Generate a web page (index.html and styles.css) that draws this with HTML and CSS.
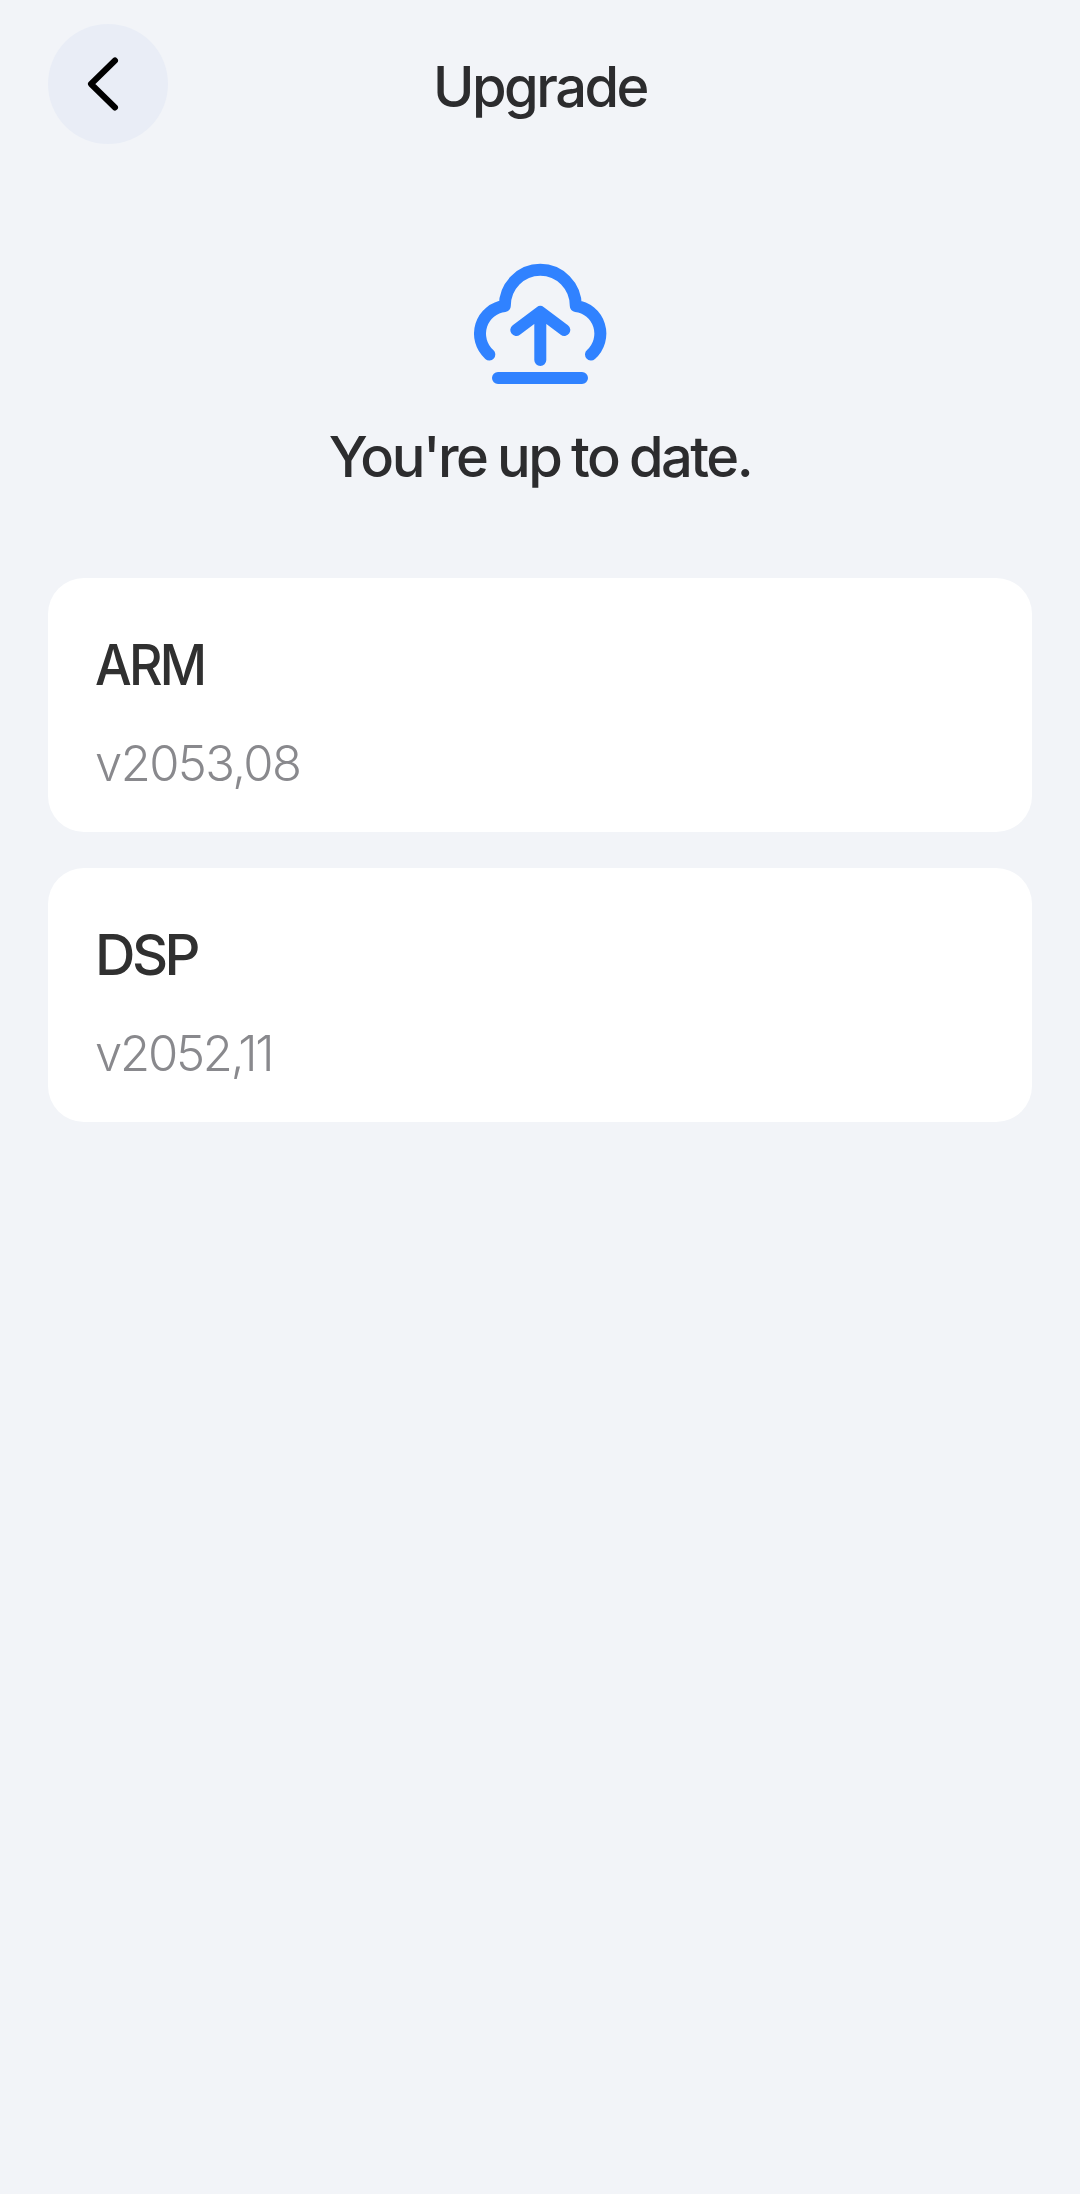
FILE: index.html
```html
<!DOCTYPE html>
<html lang="en">
<head>
<meta charset="utf-8">
<title>Upgrade</title>
<link rel="stylesheet" href="styles.css">
</head>
<body>
<header class="bar">
  <button class="back" aria-label="Back">
    <svg width="120" height="120" viewBox="0 0 120 120" fill="none" stroke="#000" stroke-width="6" stroke-linecap="round" stroke-linejoin="round"><path d="M67 36.5 43 60 67 83.5"/></svg>
  </button>
  <h1 class="title">Upgrade</h1>
</header>
<main>
  <section class="status">
    <svg class="cloud" width="160" height="150" viewBox="0 0 160 150" fill="none" stroke="#3082ff" stroke-width="12" stroke-linecap="round" stroke-linejoin="round">
      <path d="M29.3 104.4A27.8 27.8 0 0 1 44.8 56A35.3 36 0 0 1 115.8 56A27.8 27.8 0 0 1 131 104.4"/>
      <path d="M80.3 110V62M56.3 80 80.3 62 104.3 80M38 128H122"/>
    </svg>
    <p class="message">You're up to date.</p>
  </section>
  <section class="list">
    <article class="card"><h2 class="name name-arm">ARM</h2><p class="version">v2053,08</p></article>
    <article class="card"><h2 class="name">DSP</h2><p class="version version-dsp">v2052,11</p></article>
  </section>
</main>
</body>
</html>
```
FILE: styles.css
```css
* { box-sizing: border-box; margin: 0; padding: 0; }
body { min-height: 2194px; background: #f2f4f8; color: #2c2c2e; font-family: Inter, "Liberation Sans", sans-serif; }
.bar { display: grid; grid-template-columns: 120px 1fr 120px; align-items: center; height: 168px; padding: 0 48px; }
.back { width: 120px; height: 120px; border: 0; border-radius: 50%; background: #e9edf6; }
.back svg { display: block; }
.title, .message { font-size: 56px; font-weight: 500; line-height: 72px; text-align: center; }
.title { padding-top: 6px; letter-spacing: -2.5px; }
.status { display: flex; flex-direction: column; align-items: center; padding-top: 82px; }
.cloud { display: block; }
.message { margin-top: 21px; letter-spacing: -2.5px; word-spacing: -1.8px; }
.list { display: flex; flex-direction: column; gap: 36px; padding: 85px 48px 0; }
.card { height: 254px; padding: 51px 47px 0; border-radius: 36px; background: #fff; }
.name { color: #303030; font-size: 56px; font-weight: 500; line-height: 72px; letter-spacing: -3.5px; }
.name-arm { letter-spacing: -3px; transform: scaleX(0.925); transform-origin: left; }
.version { margin-top: 31px; color: #89898d; font-size: 49px; font-weight: 300; line-height: 64px; letter-spacing: -1.6px; }
.version-dsp { letter-spacing: -2.2px; }
```
